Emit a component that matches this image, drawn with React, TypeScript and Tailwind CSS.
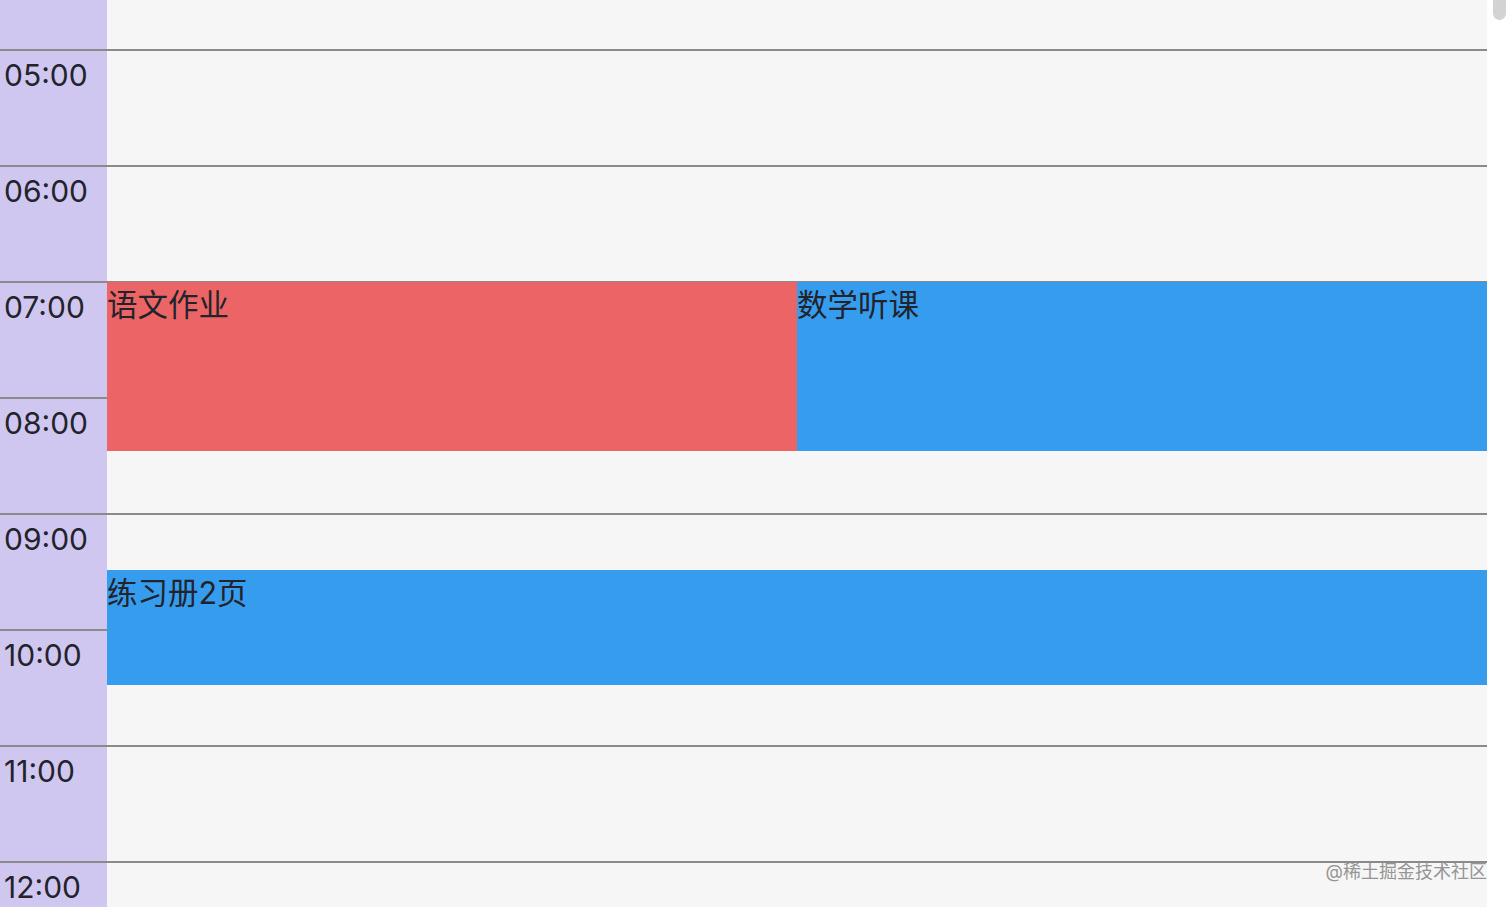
import React from "react";

const hours = ["05:00", "06:00", "07:00", "08:00", "09:00", "10:00", "11:00", "12:00"];

const font = { fontFamily: 'Inter, "Noto Sans CJK SC", sans-serif' };

export default function App() {
  return (
    <div className="flex h-[907px] w-[1512px] overflow-hidden bg-white" style={font}>
      <div className="relative flex h-[907px] w-[1487px] shrink-0 flex-col bg-[#f6f6f6]">
        <div className="flex h-[49px] shrink-0">
          <div className="w-[107px] bg-[#cfc7f0]" />
        </div>
        {hours.map((h) => (
          <div key={h} className="flex h-[116px] shrink-0 border-t-2 border-[#8a8a8a]">
            <div className="w-[107px] bg-[#cfc7f0] pl-[4px] pt-[6px] text-[30px] leading-[36px] text-[#23232b]">
              {h}
            </div>
          </div>
        ))}
        <div className="absolute left-[107px] top-[282px] flex h-[169px] w-[1380px]">
          <div className="flex-1 bg-[#ec6566] text-[30.5px] leading-[46px] text-[#23232b]">语文作业</div>
          <div className="flex-1 bg-[#369cee] text-[30.5px] leading-[46px] text-[#23232b]">数学听课</div>
        </div>
        <div className="absolute left-[107px] top-[570px] h-[115px] w-[1380px] bg-[#369cee] text-[30.5px] leading-[46px] text-[#23232b]">
          练习册2页
        </div>
        <div className="absolute right-0 top-[859px] text-[18px] leading-[26px] text-[#959595]">
          @稀土掘金技术社区
        </div>
      </div>
      <div className="h-[907px] flex-1 bg-white pl-[6px]">
        <div className="h-[20px] w-[13px] rounded-b-full bg-[#d3d3d3]" />
      </div>
    </div>
  );
}
